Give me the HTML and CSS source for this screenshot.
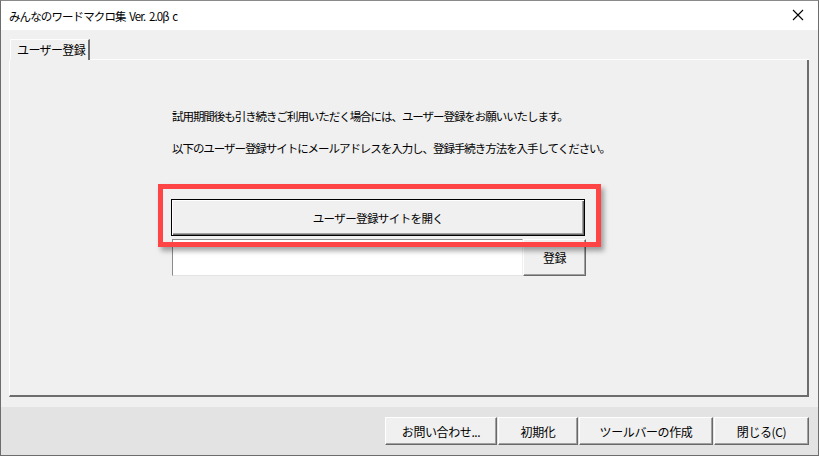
FILE: index.html
```html
<!DOCTYPE html>
<html lang="ja">
<head>
  <meta charset="UTF-8" />
  <title>みんなのワードマクロ集</title>
  <link rel="stylesheet" href="styles.css">
</head>
<body>
  <div class="window">
    <!-- Title bar -->
    <div class="titlebar">
      <span class="title">みんなのワードマクロ集 Ver. 2.0β c</span>
      <svg class="close" width="12" height="12" viewBox="0 0 12 12">
        <path d="M1 1 L11 11 M11 1 L1 11" stroke="#000" stroke-width="1.1" fill="none"/>
      </svg>
    </div>

    <!-- Tab area -->
    <div class="content">
      <div class="tabs">
        <div class="tab">ユーザー登録</div>
        <div class="tab-rest"></div>
      </div>
      <div class="panel">
        <p class="msg">試用期間後も引き続きご利用いただく場合には、ユーザー登録をお願いいたします。</p>
        <p class="msg second">以下のユーザー登録サイトにメールアドレスを入力し、登録手続き方法を入手してください。</p>

        <button class="btn btn-open">ユーザー登録サイトを開く</button>
        <div class="register-row">
          <input type="text" class="email" />
          <button class="btn btn-register">登録</button>
        </div>

        <!-- highlight overlay -->
        <div class="highlight"></div>
      </div>
    </div>

    <!-- Footer buttons -->
    <div class="footer">
      <button class="btn btn-foot w-contact">お問い合わせ...</button>
      <button class="btn btn-foot w-init">初期化</button>
      <button class="btn btn-foot w-toolbar">ツールバーの作成</button>
      <button class="btn btn-foot w-close">閉じる(C)</button>
    </div>
  </div>
</body>
</html>
```

FILE: styles.css
```css
body {
  margin: 0;
  padding: 0;
  background: #ffffff;
  font-family: "Noto Sans CJK JP", "Noto Sans", sans-serif;
  font-size: 11px;
  color: #000;
}

.window {
  width: 819px;
  height: 456px;
  box-sizing: border-box;
  border: 1px solid #6d6d6d;
  border-top-color: #8a8a8a;
  display: flex;
  flex-direction: column;
  background: #f0f0f0;
}

/* Title bar */
.titlebar {
  height: 29px;
  background: #ffffff;
  display: flex;
  align-items: center;
  padding: 0 14px 0 8px;
  flex-shrink: 0;
}

.title {
  flex: 1;
  font-size: 11.5px;
  letter-spacing: -0.9px;
  word-spacing: 2px;
}

.close {
  margin-top: -1px;
}

/* Tab control */
.content {
  flex: 1;
  display: flex;
  flex-direction: column;
  padding: 9px 9px 10px 8px;
}

.tabs {
  display: flex;
  height: 21px;
  align-items: flex-end;
}

.tab {
  height: 21px;
  box-sizing: border-box;
  width: 80px;
  padding: 1px 0 0 6px;
  border-top: 1px solid #fdfdfd;
  border-left: 1px solid #fdfdfd;
  border-right: 2px solid #6d6d6d;
  margin-left: 1px;
  line-height: 18px;
  font-size: 12px;
  letter-spacing: -0.6px;
}

.tab-rest {
  flex: 1;
  border-bottom: 1px solid #fdfdfd;
}

.panel {
  flex: 1;
  position: relative;
  border-left: 1px solid #fdfdfd;
  border-right: 2px solid #6d6d6d;
  border-bottom: 2px solid #6d6d6d;
  padding: 47px 0 0 162px;
}

.msg {
  margin: 0;
  line-height: 18px;
  font-size: 11.5px;
  letter-spacing: -1.05px;
}

.msg.second {
  margin-top: 14px;
}

/* Buttons */
.btn {
  font-family: inherit;
  font-size: 11px;
  letter-spacing: -0.6px;
  color: #000;
  background: #f0f0f0;
  border: 1px solid;
  border-color: #ffffff #696969 #696969 #ffffff;
  box-shadow: inset -1px -1px 0 #a0a0a0;
  padding: 0;
  margin: 0;
}

.btn-open {
  display: block;
  width: 414px;
  height: 37px;
  margin: 42px 0 0 -1px;
  border: 1px solid #000;
  font-size: 11.5px;
  box-shadow: inset 1px 1px 0 #fff, inset -1px -1px 0 #696969, inset -2px -2px 0 #a0a0a0;
}

.register-row {
  display: flex;
  margin-top: 3px;
}

.email {
  width: 351px;
  height: 37px;
  box-sizing: border-box;
  border: 1px solid;
  border-color: #8a8a8a #f0f0f0 #e3e3e3 #8a8a8a;
  background: #fff;
  margin: 0;
  padding: 0;
}

.btn-register {
  width: 63px;
  height: 37px;
  font-size: 12px;
}

/* Red highlight overlay */
.highlight {
  position: absolute;
  left: 148px;
  top: 124px;
  width: 433px;
  height: 53px;
  border: 5px solid #fe4444;
  box-shadow: 3px 4px 5px rgba(0, 0, 0, 0.35);
}

/* Footer */
.footer {
  height: 48px;
  background: #e3e3e3;
  display: flex;
  justify-content: flex-end;
  align-items: flex-start;
  padding: 10px 9px 0 0;
  box-sizing: border-box;
  flex-shrink: 0;
}

.btn-foot {
  height: 28px;
  margin-left: 1px;
  font-size: 12px;
  letter-spacing: -0.4px;
}

.w-contact { width: 112px; }
.w-init { width: 80px; }
.w-toolbar { width: 134px; }
.w-close { width: 95px; }
```
